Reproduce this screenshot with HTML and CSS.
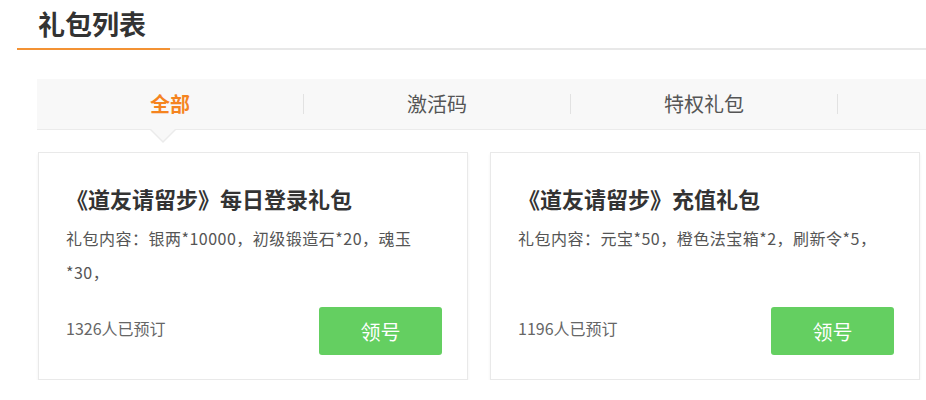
FILE: index.html
```html
<!DOCTYPE html>
<html>

<head>
    <meta charset="UTF-8">
    <title>礼包列表</title>
    <link rel="stylesheet" href="styles.css">
</head>

<body>
    <div class="section-head">
        <h2 class="section-title">礼包列表</h2>
    </div>

    <div class="tabs">
        <div class="tab active">全部</div>
        <span class="tab-sep"></span>
        <div class="tab">激活码</div>
        <span class="tab-sep"></span>
        <div class="tab">特权礼包</div>
        <span class="tab-sep"></span>
    </div>

    <div class="gift-list">
        <div class="gift-card">
            <h3 class="gift-title">《道友请留步》每日登录礼包</h3>
            <p class="gift-content">礼包内容：银两*10000，初级锻造石*20，魂玉*30，</p>
            <div class="gift-footer">
                <span class="gift-count">1326人已预订</span>
                <button class="gift-button">领号</button>
            </div>
        </div>
        <div class="gift-card">
            <h3 class="gift-title">《道友请留步》充值礼包</h3>
            <p class="gift-content">礼包内容：元宝*50，橙色法宝箱*2，刷新令*5，</p>
            <div class="gift-footer">
                <span class="gift-count">1196人已预订</span>
                <button class="gift-button">领号</button>
            </div>
        </div>
    </div>
</body>

</html>
```

FILE: styles.css
```css
body {
    margin: 0;
    padding: 0;
    font-family: "Noto Sans CJK SC", "Noto Sans", sans-serif;
    background: #fff;
    color: #333;
}

.section-head {
    margin-left: 17px;
    border-bottom: 2px solid #e8e8e8;
}

.section-title {
    display: inline-block;
    margin: 0 0 -2px;
    padding: 0 24px 0 21px;
    font-size: 27px;
    font-weight: 700;
    line-height: 48px;
    color: #333;
    border-bottom: 2px solid #f39234;
}

.tabs {
    position: relative;
    display: flex;
    align-items: center;
    margin: 29px 0 0 37px;
    height: 50px;
    background: #f8f8f8;
    border-bottom: 1px solid #ebebeb;
}

.tab {
    position: relative;
    width: 266px;
    text-align: center;
    font-size: 20px;
    line-height: 50px;
    color: #555;
}

.tab.active {
    color: #f5841f;
    font-weight: 700;
}

/* 选中标签下方的小三角 */
.tab.active::before,
.tab.active::after {
    content: "";
    position: absolute;
    left: 113px;
    width: 0;
    height: 0;
    border-style: solid;
    border-color: transparent;
}

.tab.active::before {
    top: 51px;
    border-width: 13px 13px 0;
    border-top-color: #ebebeb;
}

.tab.active::after {
    top: 49px;
    border-width: 13px 13px 0;
    border-top-color: #f8f8f8;
}

.tab-sep {
    width: 1px;
    height: 20px;
    background: #e2e2e2;
}

.gift-list {
    display: grid;
    grid-template-columns: 1fr 1fr;
    gap: 22px;
    margin: 22px 6px 0 38px;
}

.gift-card {
    display: flex;
    flex-direction: column;
    padding: 30px 25px 24px 27px;
    border: 1px solid #e9e9e9;
    box-shadow: 0 2px 3px rgba(0, 0, 0, 0.06);
    background: #fff;
}

.gift-title {
    margin: 0;
    font-size: 22px;
    font-weight: 700;
    line-height: 30px;
    color: #333;
}

.gift-content {
    margin: 8px 0 0;
    font-size: 16px;
    line-height: 34px;
    letter-spacing: 0.5px;
    color: #555;
}

.gift-footer {
    display: flex;
    justify-content: space-between;
    align-items: center;
    margin-top: auto;
    padding-top: 18px;
}

.gift-count {
    margin-top: -6px;
    font-size: 16px;
    color: #666;
}

.gift-button {
    width: 123px;
    height: 48px;
    border: none;
    border-radius: 3px;
    background: #64cf61;
    color: #fff;
    font-family: inherit;
    font-size: 20px;
    cursor: pointer;
}
```
